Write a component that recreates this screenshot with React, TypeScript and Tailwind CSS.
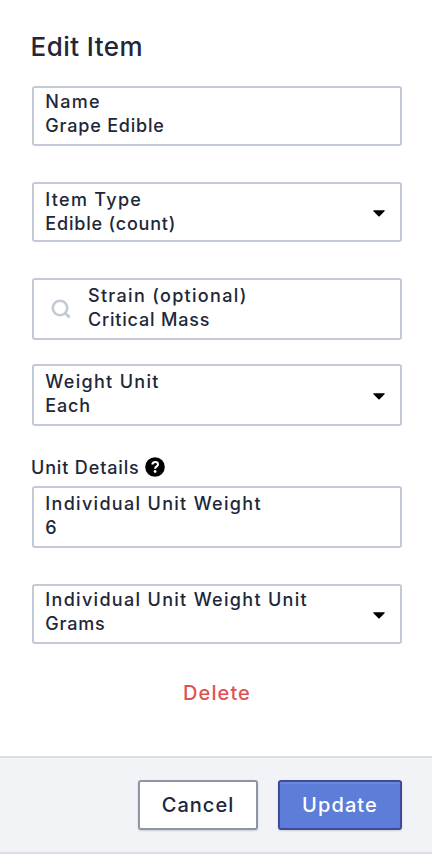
import clsx from 'clsx';
import type { ReactNode } from 'react';

type FieldProps = {
  label: string;
  value: string;
  className?: string;
  textClassName?: string;
  icon?: ReactNode;
  select?: boolean;
};

function SearchIcon() {
  return (
    <svg width="20" height="20" viewBox="0 0 20 20" fill="none">
      <circle cx="9" cy="9" r="7.2" stroke="#c3cad5" strokeWidth="2.6" />
      <path d="M13.8 13.8L18.6 18.4" stroke="#c3cad5" strokeWidth="2.9" />
    </svg>
  );
}

function Caret() {
  return (
    <svg width="12" height="7" viewBox="0 0 12 7">
      <path d="M0.6 0.3H11.4Q12.1 0.5 11.5 1.2L6.6 6.3Q6 6.8 5.4 6.3L0.5 1.2Q-0.1 0.5 0.6 0.3Z" fill="#000" />
    </svg>
  );
}

function Field({ label, value, className, textClassName, icon, select }: FieldProps) {
  return (
    <div className={clsx('flex rounded-[3px] border-2 border-[#c3c9d5] bg-white', className)}>
      {icon && <div className="ml-[17px] mr-[17px] shrink-0 self-center">{icon}</div>}
      <div className={clsx('flex-1 text-lg leading-6', !icon && 'pl-[11.3px]', textClassName ?? 'pt-1')}>
        <div className="tracking-[1.31px]">{label}</div>
        <div className="tracking-[0.8px]">{value}</div>
      </div>
      {select && (
        <div className="mr-[15px] shrink-0 self-center pt-[3px]">
          <Caret />
        </div>
      )}
    </div>
  );
}

export default function App() {
  return (
    <div className="flex h-[854px] w-[432px] flex-col bg-white font-['Inter',sans-serif] font-[450] text-[#212738]">
      <main className="flex flex-1 flex-col pl-8 pr-[30px]">
        <h1 className="-ml-[1.5px] mt-[29px] text-[26px] leading-9 tracking-[0.45px]">Edit Item</h1>

        <Field label="Name" value="Grape Edible" className="mt-[21px] h-[60px]" textClassName="pt-0.5" />
        <Field label="Item Type" value="Edible (count)" className="mt-9 h-[60px]" select />
        <Field label="Strain (optional)" value="Critical Mass" className="mt-9 h-[62px]" icon={<SearchIcon />} />
        <Field label="Weight Unit" value="Each" className="mt-6 h-[62px]" select />

        <div className="-ml-px mt-[29px] flex h-6 items-center gap-[5px] text-lg leading-6 tracking-[0.85px]">
          <span className="mt-0.5">Unit Details</span>
          <svg width="20" height="20" viewBox="0 0 20 20">
            <circle cx="10" cy="10" r="9.8" fill="#000" />
            <path d="M7.2 7.6C7.6 5.8 8.7 5 10.2 5C11.9 5 13 6 13 7.4C13 9.4 10.1 9.5 10.1 11.8" stroke="#fff" strokeWidth="2.1" fill="none" />
            <circle cx="10.1" cy="14.5" r="1.4" fill="#fff" />
          </svg>
        </div>

        <Field label="Individual Unit Weight" value="6" className="mt-[7px] h-[62px]" />
        <Field label="Individual Unit Weight Unit" value="Grams" className="mt-9 h-[60px]" textClassName="pt-0.5" select />

        <button className="mt-[33px] self-center text-xl leading-8 tracking-[1.1px] text-[#e05252]">Delete</button>
      </main>

      <footer className="flex h-[98px] items-center justify-end gap-5 border-y-2 border-[#dce0e6] bg-[#f1f3f7] pr-[30px]">
        <button className="h-[50px] w-[120px] rounded-[3px] border-2 border-[#8c96a6] bg-white text-xl leading-6 tracking-[1px] shadow-[0_1px_2px_rgba(0,0,0,0.15)]">
          Cancel
        </button>
        <button className="h-[50px] w-[124px] rounded-[3px] border-2 border-[#3f4a9b] bg-[#5c7dd8] text-xl leading-6 tracking-[1.1px] text-white shadow-[0_1px_2px_rgba(0,0,0,0.15),inset_0_2px_1px_rgba(255,255,255,0.1)]">
          Update
        </button>
      </footer>
    </div>
  );
}
